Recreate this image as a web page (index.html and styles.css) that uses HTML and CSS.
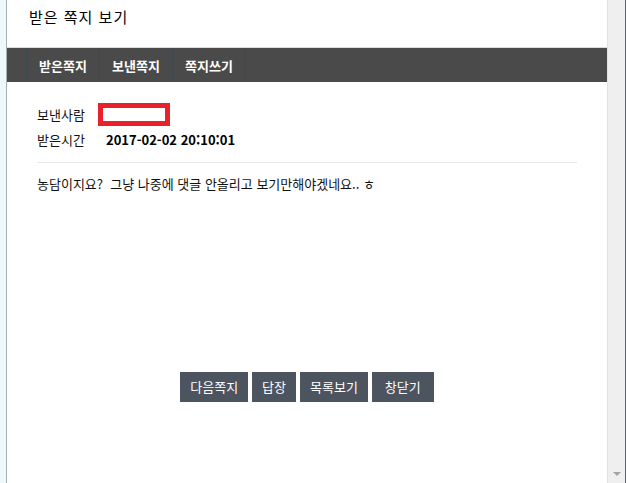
FILE: index.html
```html
<!DOCTYPE html>
<html lang="ko">
<head>
<meta charset="utf-8">
<title>받은 쪽지 보기</title>
<link rel="stylesheet" href="styles.css">
</head>
<body>
<div class="frame">
  <div class="edge"></div>
  <div class="main">
    <header class="header"><h1 class="title">받은 쪽지 보기</h1></header>
    <nav class="tabs">
      <span class="tab-spacer"></span>
      <a class="tab">받은쪽지</a>
      <a class="tab">보낸쪽지</a>
      <a class="tab">쪽지쓰기</a>
    </nav>
    <section class="content">
      <div class="info">
        <span class="label">보낸사람</span>
        <span class="sender"><span class="redact"></span></span>
        <span class="label">받은시간</span>
        <span class="date">2017-02-02 20:10:01</span>
      </div>
      <div class="message">농담이지요?&nbsp; 그냥 나중에 댓글 안올리고 보기만해야겠네요.. ㅎ</div>
    </section>
    <div class="buttons">
      <button class="btn">다음쪽지</button>
      <button class="btn">답장</button>
      <button class="btn">목록보기</button>
      <button class="btn btn-wide">창닫기</button>
    </div>
  </div>
  <div class="scrollbar"><span class="arrow"></span></div>
</div>
</body>
</html>
```

FILE: styles.css
```css
html, body {
  margin: 0;
  padding: 0;
  height: 100%;
  background: #fff;
}
body {
  font-family: "Noto Sans CJK KR", "Noto Sans", sans-serif;
  color: #111;
  font-size: 13px;
}
.frame {
  display: flex;
  height: 483px;
  overflow: hidden;
}
.edge {
  width: 6px;
  flex: none;
  background: #eef8fc;
  border-right: 1px solid #a8b0b4;
}
.main {
  flex: 1;
  display: flex;
  flex-direction: column;
  min-width: 0;
}
.header {
  height: 48px;
  border-bottom: 1px solid #d9dcde;
  box-sizing: border-box;
  display: flex;
  align-items: center;
  padding-left: 22px;
  padding-bottom: 14px;
}
.title {
  margin: 0;
  font-size: 15px;
  font-weight: normal;
  color: #000;
  letter-spacing: 1px;
}
.tabs {
  height: 34px;
  background: #4a4a4a;
  display: flex;
  align-items: stretch;
}
.tab-spacer {
  width: 19px;
  border-right: 1px solid #3a4a50;
}
.tab {
  width: 72px;
  border-right: 1px solid #3a4a50;
  color: #fff;
  font-weight: bold;
  font-size: 13px;
  display: flex;
  align-items: center;
  justify-content: center;
}
.content {
  padding: 0 30px;
}
.info {
  display: grid;
  grid-template-columns: 61px auto;
  row-gap: 4px;
  align-items: center;
  padding-top: 21px;
  padding-bottom: 13px;
  border-bottom: 1px solid #e6e8ea;
}
.label {
  font-size: 13px;
  line-height: 19px;
  color: #111;
}
.sender {
  display: flex;
}
.redact {
  width: 62px;
  height: 13px;
  border: 5px solid #e8212b;
}
.date {
  margin-left: 8px;
  font-weight: bold;
  font-size: 13px;
  line-height: 19px;
  color: #000;
}
.message {
  padding-top: 11px;
  font-size: 13px;
  line-height: 19px;
  color: #111;
}
.buttons {
  display: flex;
  justify-content: center;
  gap: 4px;
  margin-top: 179px;
}
.btn {
  height: 30px;
  border: 0;
  background: #4c5460;
  color: #fff;
  font-family: "Noto Sans CJK KR", "Noto Sans", sans-serif;
  font-size: 13px;
  padding: 0 10px;
  line-height: 30px;
}
.btn-wide {
  padding: 0 13px;
}
.scrollbar {
  width: 17px;
  flex: none;
  background: #efefef;
  border-left: 1px solid #e2e2e2;
  border-right: 1px solid #5c6670;
  position: relative;
}
.arrow {
  position: absolute;
  left: 5px;
  bottom: 7px;
  width: 0;
  height: 0;
  border-left: 4px solid transparent;
  border-right: 4px solid transparent;
  border-top: 4px solid #a3a3a3;
}
```
